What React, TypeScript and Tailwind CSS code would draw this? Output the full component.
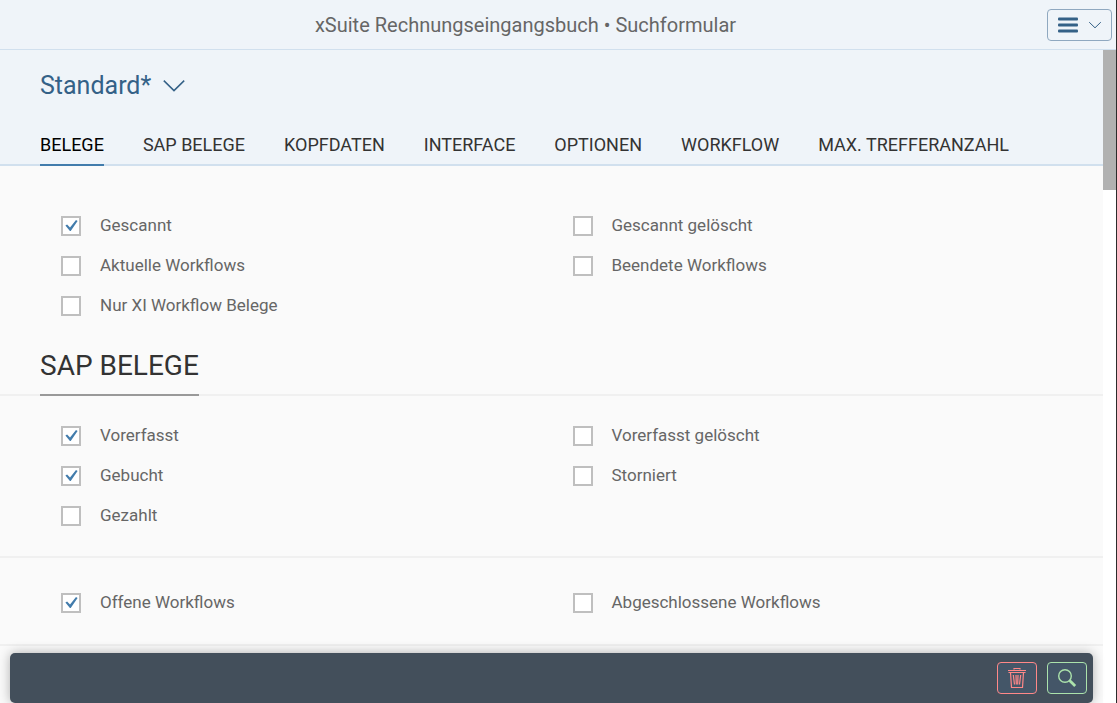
import { useState } from "react";

type Option = { label: string; checked?: boolean };

const tabs = [
  "BELEGE",
  "SAP BELEGE",
  "KOPFDATEN",
  "INTERFACE",
  "OPTIONEN",
  "WORKFLOW",
  "MAX. TREFFERANZAHL",
];

const documentOptions: Option[] = [
  { label: "Gescannt", checked: true },
  { label: "Gescannt gelöscht" },
  { label: "Aktuelle Workflows" },
  { label: "Beendete Workflows" },
  { label: "Nur XI Workflow Belege" },
];

const sapOptions: Option[] = [
  { label: "Vorerfasst", checked: true },
  { label: "Vorerfasst gelöscht" },
  { label: "Gebucht", checked: true },
  { label: "Storniert" },
  { label: "Gezahlt" },
];

const workflowOptions: Option[] = [
  { label: "Offene Workflows", checked: true },
  { label: "Abgeschlossene Workflows" },
];

function Checkbox({ label, checked = false }: Option) {
  const [on, setOn] = useState(checked);

  return (
    <label className="flex h-10 items-center gap-[19px] pl-[21px] text-[17px] text-[#666666]">
      <span className="grid size-5 shrink-0 place-items-center">
        <input
          type="checkbox"
          checked={on}
          onChange={(e) => setOn(e.target.checked)}
          className="col-start-1 row-start-1 size-5 appearance-none border-2 border-[#bfbfbf] bg-white"
        />
        {on && (
          <svg
            viewBox="0 0 20 20"
            className="pointer-events-none col-start-1 row-start-1 size-5"
            fill="#427cac"
            aria-hidden="true"
          >
            <path d="M4.4 9.6 6.1 8.5 9 11.5 15 4 16.6 5.1 9.7 15H8.9Z" />
          </svg>
        )}
      </span>
      {label}
    </label>
  );
}

function OptionGrid({ options }: { options: Option[] }) {
  return (
    <div className="grid grid-cols-2 px-10">
      {options.map((option) => (
        <Checkbox key={option.label} {...option} />
      ))}
    </div>
  );
}

export default function App() {
  const [active, setActive] = useState("BELEGE");

  return (
    <div className="relative flex h-screen flex-col overflow-hidden border-r border-[#2b2b2b] bg-[#fafafa] font-['Roboto','Liberation_Sans',sans-serif]">
      <header className="flex h-[50px] shrink-0 items-center border-b border-[#d1e0ee] bg-[#eff4f9] pr-1 pl-1">
        <h1 className="flex-1 text-center text-xl text-[#666666]">
          xSuite Rechnungseingangsbuch • Suchformular
        </h1>
        <button
          type="button"
          aria-label="Menü"
          className="flex h-8 w-[65px] items-center justify-between rounded-sm border border-[#8fa8c0] pr-[9px] pl-[10px]"
        >
          <svg viewBox="0 0 20 16" className="h-4 w-5" fill="#346187" aria-hidden="true">
            <rect y="0.5" width="20" height="3" rx="1" />
            <rect y="6.5" width="20" height="3" rx="1" />
            <rect y="12.5" width="20" height="3" rx="1" />
          </svg>
          <svg viewBox="0 0 14 8" className="h-2 w-[14px]" fill="none" stroke="#346187" aria-hidden="true">
            <path d="M1.2 1.2 7 6.8 12.8 1.2" />
          </svg>
        </button>
      </header>

      <div className="flex min-h-0 flex-1">
        <main className="min-w-0 flex-1 overflow-hidden">
          <div className="border-b-2 border-[#d1e0ee] bg-[#eff4f9] px-10 pt-5">
            <button type="button" className="flex h-8 items-center gap-3 text-[25px] text-[#346187]">
              Standard*
              <svg viewBox="0 0 22 12" className="h-3 w-[22px]" fill="none" stroke="#346187" strokeWidth="1.5" aria-hidden="true">
                <path d="M0.8 0.6 11 10.6 21.2 0.6" />
              </svg>
            </button>
            <nav className="-mb-0.5 flex gap-[39px] pt-6 text-lg">
              {tabs.map((tab) => (
                <button
                  key={tab}
                  type="button"
                  onClick={() => setActive(tab)}
                  className={
                    tab === active
                      ? "h-10 border-b-2 border-[#427cac] whitespace-nowrap text-black"
                      : "h-10 border-b-2 border-transparent whitespace-nowrap text-[#333333]"
                  }
                >
                  {tab}
                </button>
              ))}
            </nav>
          </div>

          <section className="pt-10 pb-2">
            <OptionGrid options={documentOptions} />
          </section>

          <section>
            <div className="border-b-2 border-[#f0f0f0] px-10">
              <h2 className="-mb-0.5 inline-block h-[62px] border-b-2 border-[#999999] text-[28px] leading-[64px] text-[#333333]">
                SAP BELEGE
              </h2>
            </div>
            <div className="border-b-2 border-[#f0f0f0] py-5">
              <OptionGrid options={sapOptions} />
            </div>
            <div className="border-b-2 border-[#f0f0f0] pt-[25px] pb-[21px]">
              <OptionGrid options={workflowOptions} />
            </div>
          </section>
        </main>

        <div className="w-[13px] shrink-0 bg-white">
          <div className="h-[140px] bg-[#b1b1b1]" />
        </div>
      </div>

      <footer className="absolute right-[23px] bottom-0 left-[10px] flex h-[50px] items-center justify-end gap-[10px] rounded-[5px] bg-[#434f5b] pr-[6px] shadow-[0_0_12px_rgba(0,0,0,0.3)]">
        <button
          type="button"
          aria-label="Löschen"
          className="grid h-8 w-10 place-items-center rounded-sm border border-[#ff8888] bg-[#445668]"
        >
          <svg viewBox="0 0 20 22" className="h-[22px] w-5" fill="none" stroke="#ff8888" strokeWidth="1.2" aria-hidden="true">
            <path d="M1 3.5H19M1.5 5.5H18.5M7 2.5V1.5H13V2.5M3.5 5.5 4.5 20.5H15.5L16.5 5.5M6.3 8 7.5 17.5M9 8 9.3 17.5M11 8 10.7 17.5M13.7 8 12.5 17.5" />
          </svg>
        </button>
        <button
          type="button"
          aria-label="Suchen"
          className="grid h-8 w-10 place-items-center rounded-sm border border-[#abe2ab] bg-[#445668]"
        >
          <svg viewBox="0 0 20 20" className="size-5" fill="none" stroke="#abe2ab" aria-hidden="true">
            <circle cx="8" cy="8" r="6.3" strokeWidth="1.4" />
            <path d="M12.6 12.6 18.2 18" strokeWidth="2.8" />
          </svg>
        </button>
      </footer>
    </div>
  );
}
